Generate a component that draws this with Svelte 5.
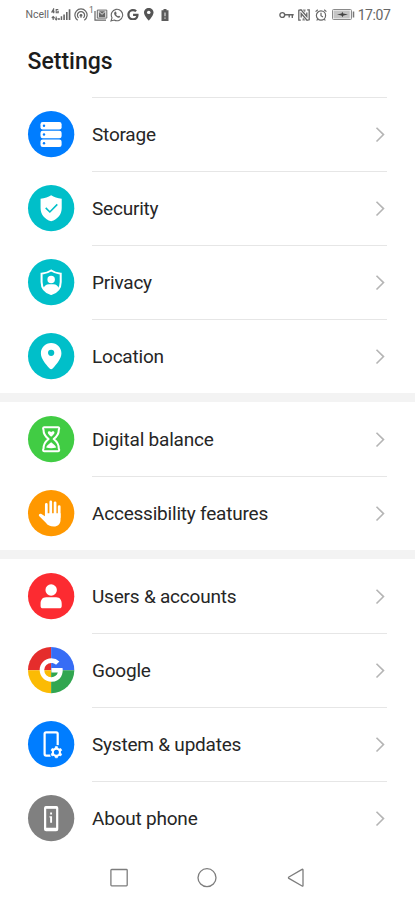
<script lang="ts">
	type TItem = { id: string; label: string; color: string };

	const groups: TItem[][] = [
		[
			{ id: 'storage', label: 'Storage', color: '#007dff' },
			{ id: 'security', label: 'Security', color: '#00bfc9' },
			{ id: 'privacy', label: 'Privacy', color: '#00bfc9' },
			{ id: 'location', label: 'Location', color: '#00bfc9' }
		],
		[
			{ id: 'balance', label: 'Digital balance', color: '#41cc44' },
			{ id: 'accessibility', label: 'Accessibility features', color: '#ff9800' }
		],
		[
			{ id: 'users', label: 'Users & accounts', color: '#fc2b31' },
			{ id: 'google', label: 'Google', color: '#fff' },
			{ id: 'system', label: 'System & updates', color: '#007dff' },
			{ id: 'about', label: 'About phone', color: '#808080' }
		]
	];

	const googleG =
		'M12.545 10.239v3.821h5.445c-.712 2.315-2.647 3.972-5.445 3.972a6.033 6.033 0 1 1 0-12.064c1.498 0 2.866.549 3.921 1.453l2.814-2.814A9.969 9.969 0 0 0 12.545 2C7.021 2 2.543 6.477 2.543 12s4.478 10 10.002 10c8.396 0 10.249-7.85 9.426-11.748z';
	const pin = 'M12 2C8.13 2 5 5.13 5 9c0 5.25 7 13 7 13s7-7.75 7-13c0-3.87-3.13-7-7-7z';
	const teeth = [0, 60, 120, 180, 240, 300];
</script>

<div class="phone">
	<header class="status">
		<div class="status-left">
			<span class="carrier">Ncell</span>
			<svg class="signal" width="20" height="14" viewBox="0 0 20 14">
				<path d="M2.6 5.2V1L.8 3.900h2.800M7.300 1.500H5.200v3.200h2V3.200H6.200" fill="none" stroke="#666" stroke-width="1.100" />
				<path d="M2.200 12V8.500M.8 10l1.400-1.500L3.600 10M5.200 8.500V12M3.900 10.500 5.200 12l1.300-1.500" fill="none" stroke="#666" stroke-width="1.100" />
				<path d="M7.200 10h1.500v2H7.200zM9.700 8.300h1.500V12H9.700zM12.300 6.400h1.600V12h-1.600zM15 4h1.600v8H15zM17.700 1.200h1.700V12h-1.700z" fill="#666" />
			</svg>
			<svg class="hotspot" width="14" height="14" viewBox="0 0 14 14" fill="none" stroke="#666" stroke-width="1.200">
				<path d="M3.700 12.200a6.100 6.100 0 1 1 6.600 0M4.600 9.900a3.600 3.600 0 1 1 4.800 0" />
				<circle cx="7" cy="7.400" r="1.400" fill="#666" stroke="none" />
				<path d="M7 8.500v1.200" />
			</svg>
			<span class="count">1</span>
			<svg class="mail" width="14" height="14" viewBox="0 0 14 14">
				<path d="M1 3v9.200h11" fill="none" stroke="#666" stroke-width="1.200" />
				<path d="M3.300 2.100h9.500v8H3.300z" fill="none" stroke="#666" />
				<path d="M4.800 3.200h6.500v6H4.800z" fill="#666" />
				<path d="m4.800 3.400 3.250 2.900 3.250-2.900" fill="none" stroke="#eee" stroke-width=".9" />
			</svg>
			<svg class="whatsapp" width="14" height="14" viewBox="0 0 14 14">
				<path d="m1 13 1-3.200A5.700 5.700 0 1 1 4.200 12z" fill="none" stroke="#666" stroke-width="1.100" />
				<path d="M4.900 3.700c-1.600 1.100-.6 3.200.8 4.600s3.600 2.200 4.500.8c.3-.6-.1-.9-.7-1.200-.7-.4-1-.1-1.300.3-.9-.3-1.700-1.100-2.100-2 .5-.5.6-.8.3-1.500-.3-.8-.8-1.500-1.500-1z" fill="#666" />
			</svg>
			<svg class="small-g" width="11.500" height="11.500" viewBox="2 2 20 20">
				<path d={googleG} fill="#555" />
			</svg>
			<svg class="small-pin" width="9.500" height="12.500" viewBox="5 2 14 20" preserveAspectRatio="none">
				<path d={pin} fill="#555" />
				<circle cx="12" cy="9" r="2.600" fill="#fff" />
			</svg>
			<svg class="low" width="8" height="12" viewBox="0 0 8 12">
				<path d="M2.500 0h3v1.200h2V12H.5V1.200h2z" fill="#5c5c5c" />
				<path d="M4 3.500v3.700M4 8.400v1.400" stroke="#ddd" stroke-width="1.200" />
			</svg>
		</div>
		<div class="status-right">
			<svg class="key" width="15" height="8" viewBox="0 0 15 8" fill="none" stroke="#666" stroke-width="1.400">
				<circle cx="3.300" cy="4" r="2.400" />
				<path d="M5.700 3.800h9M10.200 4v2.600M13.300 4v3" />
			</svg>
			<svg class="nfc" width="12" height="12" viewBox="0 0 12 12">
				<path d="M2.800 11.200H.8V1.200L3 .8l5.800 6.700V3.600" fill="none" stroke="#666" stroke-width="1.300" />
				<path d="M9.200.8h2v10L9 11.200 3.200 4.500v4" fill="none" stroke="#666" stroke-width="1.300" />
				<path d="M4.500.6h3.200L7 3.600zM7.500 11.400H4.300L5 8.400z" fill="#888" />
			</svg>
			<svg class="alarm" width="12" height="12" viewBox="0 0 12 12" fill="none" stroke="#666" stroke-width="1.200">
				<circle cx="6" cy="6.500" r="4.600" />
				<path d="M6 3.800v2.900l2 1.200M.6 2.600 2.800.7M11.400 2.600 9.200.7M2.700 10.200l-1 1.300M9.300 10.200l1 1.300" />
			</svg>
			<svg class="battery" width="23" height="11" viewBox="0 0 23 11">
				<rect x=".5" y=".5" width="19" height="10" rx="1" fill="#eee" stroke="#8a8a8a" />
				<path d="M1.700 1.700h16v7.600h-16z" fill="#c4c4c4" />
				<path d="m5 5.500 4.500-1.100.8-1.700.9 1.700 4.800 1.100-4.600 1.100-.9 1.700-1-1.700z" fill="#444" />
				<path d="M21.500 2.500v6" stroke="#777" stroke-width="1.500" />
			</svg>
			<span class="time">17:07</span>
		</div>
	</header>

	<h1>Settings</h1>

	<main>
		{#each groups as group, g}
			<ul class="group" class:lined={g === 0}>
				{#each group as item (item.id)}
					<li class="row">
						<svg class="icon" viewBox="0 0 46 46">
							<circle cx="23" cy="23" r="23" fill={item.color} />
							{#if item.id === 'storage'}
								{#each [11, 19.7, 28.4] as y}
									<rect x="12.400" {y} width="21" height="7.300" rx="2.200" fill="#fff" />
									<circle cx="15.900" cy={y + 3.6} r="1.200" fill={item.color} />
								{/each}
							{:else if item.id === 'security'}
								<path d="M23 10.200c2.700 1.900 6.400 3 10.500 3.500v9.100c0 6.200-3.800 11.200-10.500 13.200-6.700-2-10.500-7-10.500-13.200v-9.100c4.100-.5 7.800-1.600 10.500-3.500z" fill="#fff" />
								<path d="m17.600 22.700 4.100 4.100 7.400-7.500" fill="none" stroke={item.color} stroke-width="1.600" />
							{:else if item.id === 'privacy'}
								<path d="M23 11.400c2.500 1.700 5.700 2.700 9.500 3.200v8.200c0 5.700-3.400 10.100-9.500 12-6.100-1.900-9.500-6.300-9.500-12v-8.200c3.800-.5 7-1.500 9.500-3.200z" fill="none" stroke="#fff" stroke-width="2" />
								<circle cx="23" cy="20.300" r="3.700" fill="#fff" />
								<path d="M15.500 29.500c.4-3 2.400-4.500 5.500-4.500h4c3.100 0 5.100 1.500 5.500 4.500-1.500 2.600-4.200 4.500-7.500 5.500-3.300-1-6-2.900-7.500-5.500z" fill="#fff" />
							{:else if item.id === 'location'}
								<path d="M23 10c-5.700 0-10.200 4.500-10.200 10.100 0 5.200 4.300 10.400 8.700 15.200.9 1 2.100 1 3 0 4.400-4.800 8.700-10 8.700-15.200C33.200 14.500 28.700 10 23 10z" fill="#fff" />
								<circle cx="23" cy="19.700" r="3.100" fill={item.color} />
							{:else if item.id === 'balance'}
								<path d="M16 11.200h14c1.200 0 1.200 1.600.6 2.400.1 4.600-2.100 7-5.100 9.300 3 2.300 5.200 4.900 5.100 9.600.6.800.6 2.500-.6 2.500H16c-1.200 0-1.200-1.700-.6-2.500-.1-4.700 2.100-7.300 5.100-9.600-3-2.300-5.200-4.700-5.100-9.300-.6-.8-.6-2.400.6-2.400z" fill="none" stroke="#fff" stroke-width="2" stroke-linejoin="round" />
								<path d="M23 20.500c-2.300-1.600-3.300-2.800-3.300-4 0-1.500 2.300-2 3.300-.4 1-1.600 3.300-1.100 3.300.4 0 1.200-1 2.400-3.300 4zM23 26c2 1.600 4.400 3 5 5.400-3 1-7 1-10 0 .6-2.400 3-3.800 5-5.400z" fill="#fff" />
							{:else if item.id === 'accessibility'}
								<path d="M18.200 26V14.300M22.600 24V11.800M26.900 24V12.700M31 27V16.400" fill="none" stroke="#fff" stroke-width="2.700" stroke-linecap="round" />
								<path d="M16.850 23h15.500v6.200c0 4.600-2.700 7-6.600 7-3.800 0-6.300-1-8-3.600l-6.500-6.500c-1.300-1.500.4-3.200 2.100-2.300l3.500 2.200z" fill="#fff" />
							{:else if item.id === 'users'}
								<circle cx="23" cy="16.900" r="5.700" fill="#fff" />
								<path d="M18 24h10c3.800 0 5.500 2.900 5.500 6.600v2.200c0 1.500-.8 2.300-2.300 2.300H14.800c-1.500 0-2.300-.8-2.300-2.300v-2.200c0-3.700 1.700-6.600 5.500-6.600z" fill="#fff" />
							{:else if item.id === 'google'}
								<path d="M23 23V0A23 23 0 0 0 0 23z" fill="#e52d2c" />
								<path d="M23 23h23A23 23 0 0 0 23 0z" fill="#376df5" />
								<path d="M23 23H0a23 23 0 0 0 23 23z" fill="#fbbb04" />
								<path d="M23 23v23a23 23 0 0 0 23-23z" fill="#31a650" />
								<path d={googleG} fill="#fff" transform="translate(8.600 8.900) scale(1.170)" />
							{:else if item.id === 'system'}
								<path d="M22.500 34.300H18c-1 0-1.500-.5-1.500-1.500V12.700c0-1 .5-1.500 1.500-1.500h10c1 0 1.500.5 1.500 1.500v11.500" fill="none" stroke="#fff" stroke-width="2.200" />
								<g transform="translate(28.200 31)">
									<circle r="6.800" fill={item.color} />
									{#each teeth as a}
										<path d="M-1.500-3.500-1-5.600H1l.5 2.100z" fill="#fff" stroke="#fff" stroke-width=".6" transform="rotate({a})" />
									{/each}
									<circle r="3.500" fill={item.color} stroke="#fff" stroke-width="2" />
								</g>
							{:else}
								<rect x="17" y="12" width="12" height="23" rx="1" fill="none" stroke="#fff" stroke-width="2.200" />
								<path d="M17 11.500h12v2.200H17zM17 32.500h12v2.700H17z" fill="#fff" />
								<path d="M22 17.500h1.900v1.900H22zM21.300 21h2.600v6.600H22v-5.200h-.7z" fill="#fff" />
							{/if}
						</svg>
						<div class="body">
							<span>{item.label}</span>
							<svg class="chevron" width="10" height="16" viewBox="0 0 10 16">
								<path d="m1.500.7 7 6.900-7 6.900" fill="none" stroke="#b5b5b5" stroke-width="1.600" />
							</svg>
						</div>
					</li>
				{/each}
			</ul>
		{/each}
	</main>

	<nav>
		<svg width="20" height="20" viewBox="0 0 20 20"><rect x="1.900" y="1.500" width="16.300" height="16.300" rx=".8" /></svg>
		<svg width="20" height="20" viewBox="0 0 20 20"><circle cx="10" cy="9.700" r="9" /></svg>
		<svg width="20" height="20" viewBox="0 0 20 20"><path d="M17 1.900v15.600c0 .6-.4.8-.9.500L2.900 10.400c-.6-.4-.6-1 0-1.400l13.200-7.600c.5-.3.9-.1.900.5z" /></svg>
	</nav>
</div>

<style>
	:global(body) {
		margin: 0;
		background: #fff;
	}

	.phone {
		width: 415px;
		height: 900px;
		display: flex;
		flex-direction: column;
		overflow: hidden;
		background: #fff;
		color: #262626;
		font-family: Roboto, sans-serif;
	}

	.status {
		display: flex;
		justify-content: space-between;
		height: 30px;
		padding: 0 24.5px 0 25.5px;
		box-sizing: border-box;
		color: #666;
	}

	.status-left,
	.status-right {
		display: flex;
		align-items: center;
		height: 29px;
	}

	.carrier {
		width: 25px;
		font-size: 10.5px;
		white-space: nowrap;
	}

	.hotspot {
		margin-left: 3.5px;
	}

	.count {
		width: 5px;
		margin: -9px 0 0 1px;
		font-size: 8.5px;
	}

	.whatsapp {
		margin-left: 2px;
	}

	.small-g {
		margin-left: 3px;
	}

	.small-pin {
		margin-left: 5.5px;
	}

	.low {
		margin-left: 7px;
	}

	.nfc {
		margin-left: 4px;
	}

	.alarm {
		margin-left: 5px;
	}

	.battery {
		margin-left: 5px;
	}

	.time {
		margin-left: 3px;
		font-size: 14px;
		letter-spacing: -0.4px;
	}

	h1 {
		height: 67px;
		margin: 0;
		padding-left: 27.5px;
		box-sizing: border-box;
		color: #1c1c1c;
		font-size: 23px;
		font-weight: 500;
		line-height: 64px;
	}

	.group {
		list-style: none;
		margin: 0;
		padding: 0;
	}

	.group + .group {
		border-top: 9px solid #f3f3f3;
	}

	.row {
		display: flex;
		align-items: center;
		height: 74px;
		padding: 0 28px 0 27.5px;
	}

	.icon {
		flex: none;
		width: 46.3px;
		height: 46.3px;
		margin-right: 18.2px;
		overflow: visible;
	}

	.body {
		flex: 1;
		display: flex;
		align-items: center;
		justify-content: space-between;
		height: 74px;
		padding-right: 2px;
		box-sizing: border-box;
		border-top: 1px solid transparent;
		font-size: 19px;
		letter-spacing: -0.21px;
	}

	.row + .row .body,
	.lined .body {
		border-top-color: #e6e6e6;
	}

	nav {
		display: flex;
		gap: 68.5px;
		padding: 12.5px 0 0 108.7px;
	}

	nav svg {
		fill: none;
		stroke: #7d7d7d;
		stroke-width: 1.3;
	}
</style>
